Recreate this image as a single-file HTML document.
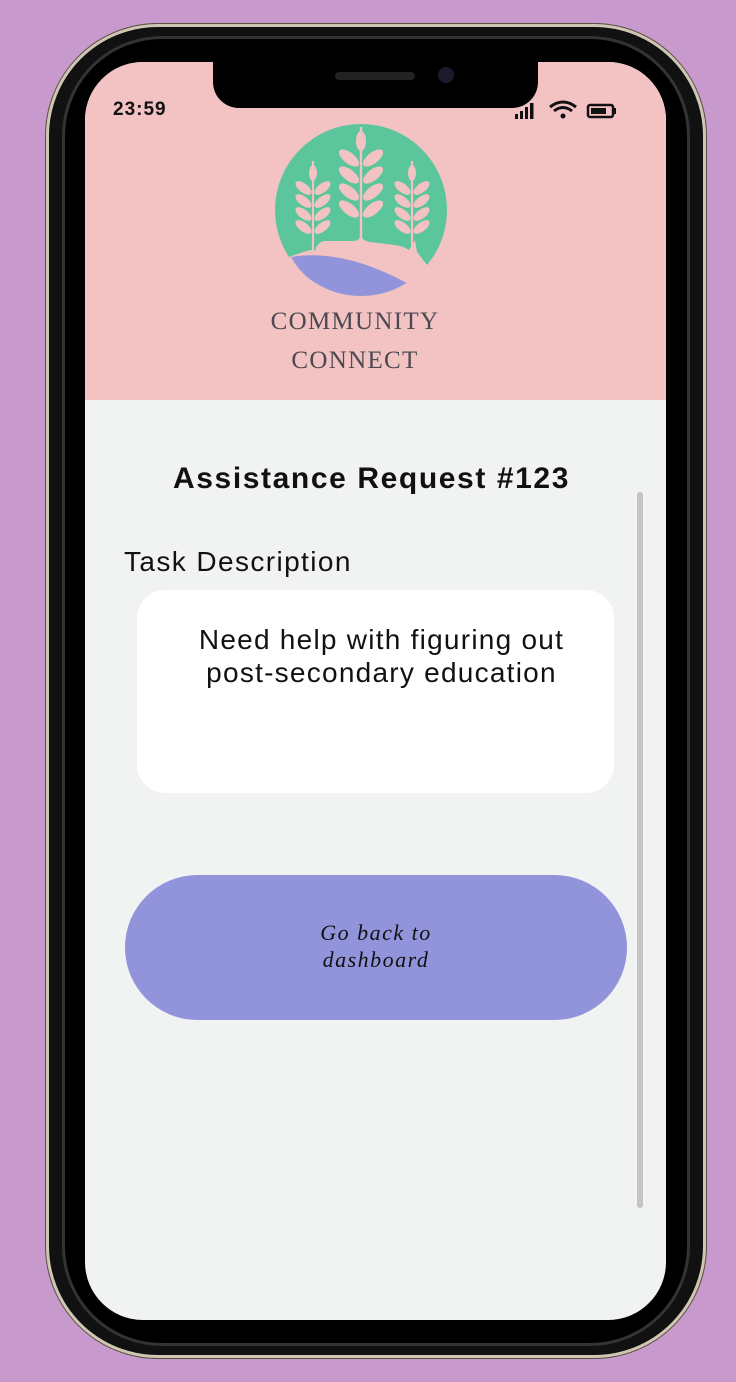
<!DOCTYPE html>
<html><head><meta charset="utf-8"><style>
*{margin:0;padding:0;box-sizing:border-box}
body{width:736px;height:1382px;background:#c799cc;position:relative;overflow:hidden;font-family:"Liberation Sans",sans-serif}
.outer{position:absolute;left:46px;top:24px;width:660px;height:1334px;border-radius:112px;background:#111;border:3px solid #cfc6b4;box-shadow:0 0 0 1px #5a4f40}
.inner{position:absolute;left:62px;top:36px;width:628px;height:1310px;border-radius:100px;background:#000;border:3px solid #333}
.screen{position:absolute;left:85px;top:62px;width:581px;height:1258px;border-radius:58px;background:#f1f2f2;overflow:hidden}
.header{position:absolute;left:0;top:0;width:581px;height:338px;background:#f3c3c4}
.notch{position:absolute;left:128px;top:0;width:325px;height:46px;background:#000;border-radius:0 0 26px 26px}
.time{position:absolute;left:28px;top:37px;font-weight:bold;font-size:19px;letter-spacing:1px;color:#111}
.title{position:absolute;left:-4px;width:581px;top:400px;text-align:center;font-weight:bold;font-size:30px;letter-spacing:1.6px;color:#111}
.lbl{position:absolute;left:39px;top:484px;font-size:28px;letter-spacing:1.4px;color:#111}
.card{position:absolute;left:52px;top:528px;width:477px;height:203px;background:#fff;border-radius:28px}
.card p{position:absolute;left:6px;top:33px;width:100%;text-align:center;font-size:28px;line-height:33px;letter-spacing:1.25px;color:#111}
.btn{position:absolute;left:40px;top:813px;width:502px;height:145px;background:#9193db;border-radius:73px;text-align:center;font-family:"Liberation Serif",serif;font-style:italic;font-size:22px;line-height:27px;letter-spacing:1.5px;color:#111;padding-top:44px}
.sb{position:absolute;left:552px;top:430px;width:6px;height:716px;background:#c4c4c4;border-radius:3px}
</style></head><body>
<div class="outer"></div>
<div class="inner"></div>
<div class="screen">
<div class="header">
<svg style="position:absolute;left:190px;top:62px" width="174" height="174" viewBox="0 0 174 174">
<defs>
<ellipse id="L" cx="0" cy="0" rx="12" ry="5.5"/>
<ellipse id="S" cx="0" cy="0" rx="9.5" ry="4.5"/>
<g id="big">
<rect x="-1.2" y="0" width="2.4" height="118"/>
<ellipse cx="0" cy="14" rx="5" ry="10"/>
<use href="#L" transform="translate(-12 31) rotate(38)"/><use href="#L" transform="translate(12 31) rotate(-38)"/>
<use href="#L" transform="translate(-12 48) rotate(38)"/><use href="#L" transform="translate(12 48) rotate(-38)"/>
<use href="#L" transform="translate(-12 65) rotate(38)"/><use href="#L" transform="translate(12 65) rotate(-38)"/>
<use href="#L" transform="translate(-12 82) rotate(38)"/><use href="#L" transform="translate(12 82) rotate(-38)"/>
</g>
<g id="sm">
<rect x="-1.1" y="0" width="2.2" height="90"/>
<ellipse cx="0" cy="12" rx="4" ry="8"/>
<use href="#S" transform="translate(-9.5 27) rotate(38)"/><use href="#S" transform="translate(9.5 27) rotate(-38)"/>
<use href="#S" transform="translate(-9.5 40) rotate(38)"/><use href="#S" transform="translate(9.5 40) rotate(-38)"/>
<use href="#S" transform="translate(-9.5 53) rotate(38)"/><use href="#S" transform="translate(9.5 53) rotate(-38)"/>
<use href="#S" transform="translate(-9.5 66) rotate(38)"/><use href="#S" transform="translate(9.5 66) rotate(-38)"/>
</g>
</defs>
<clipPath id="c"><circle cx="86" cy="86" r="86"/></clipPath>
<g clip-path="url(#c)">
<rect x="0" y="0" width="174" height="174" fill="#5bc59c"/>
<path d="M0 136 L14 133 Q30 127 36 126 L40 127 Q42 118 50 117 L78 117 Q84 117 86 112 Q88 117 95 118 L120 121 Q128 122 134 126 Q138 120 140 116 L142 128 L156 146 L174 120 L174 174 L0 174Z" fill="#f3c3c4"/>
<path d="M16 133 Q70 124 137 162 Q100 178 60 170 Q30 158 16 133Z" fill="#9193db"/>
</g>
<g fill="#f3c3c4">
<use href="#big" transform="translate(86 3)"/>
<use href="#sm" transform="translate(38 37)"/>
<use href="#sm" transform="translate(137 37)"/>
</g>
</svg>
<div style="position:absolute;left:0;width:540px;top:240px;text-align:center;font-family:'Liberation Serif',serif;font-size:25px;line-height:39px;letter-spacing:1.3px;color:#4a4a50">COMMUNITY<br>CONNECT</div>
</div>
<div class="notch"></div>
<div style="position:absolute;left:250px;top:10px;width:80px;height:8px;border-radius:4px;background:#222"></div>
<div style="position:absolute;left:353px;top:5px;width:16px;height:16px;border-radius:50%;background:#1a1a2a"></div>
<div class="time">23:59</div>
<svg style="position:absolute;left:428px;top:36px" width="106" height="24" viewBox="0 0 106 24">
<g fill="#111"><rect x="2" y="16" width="3" height="5"/><rect x="7" y="13" width="3" height="8"/><rect x="12" y="9" width="3" height="12"/><rect x="17" y="5" width="3.5" height="16"/>
<path d="M37 9 Q50 -1 63 9" stroke="#111" stroke-width="3" fill="none"/><path d="M41 13 Q50 6 59 13" stroke="#111" stroke-width="3" fill="none"/><circle cx="50" cy="18" r="2.5"/>
<rect x="75" y="7" width="25" height="12" rx="2" fill="none" stroke="#111" stroke-width="2.5"/><rect x="78" y="10" width="15" height="6"/><rect x="101" y="10" width="2" height="6"/></g>
</svg>
<div class="title">Assistance Request #123</div>
<div class="lbl">Task Description</div>
<div class="card"><p>Need help with figuring out<br>post-secondary education</p></div>
<div class="btn">Go back to<br>dashboard</div>
<div class="sb"></div>
</div>
</body></html>
